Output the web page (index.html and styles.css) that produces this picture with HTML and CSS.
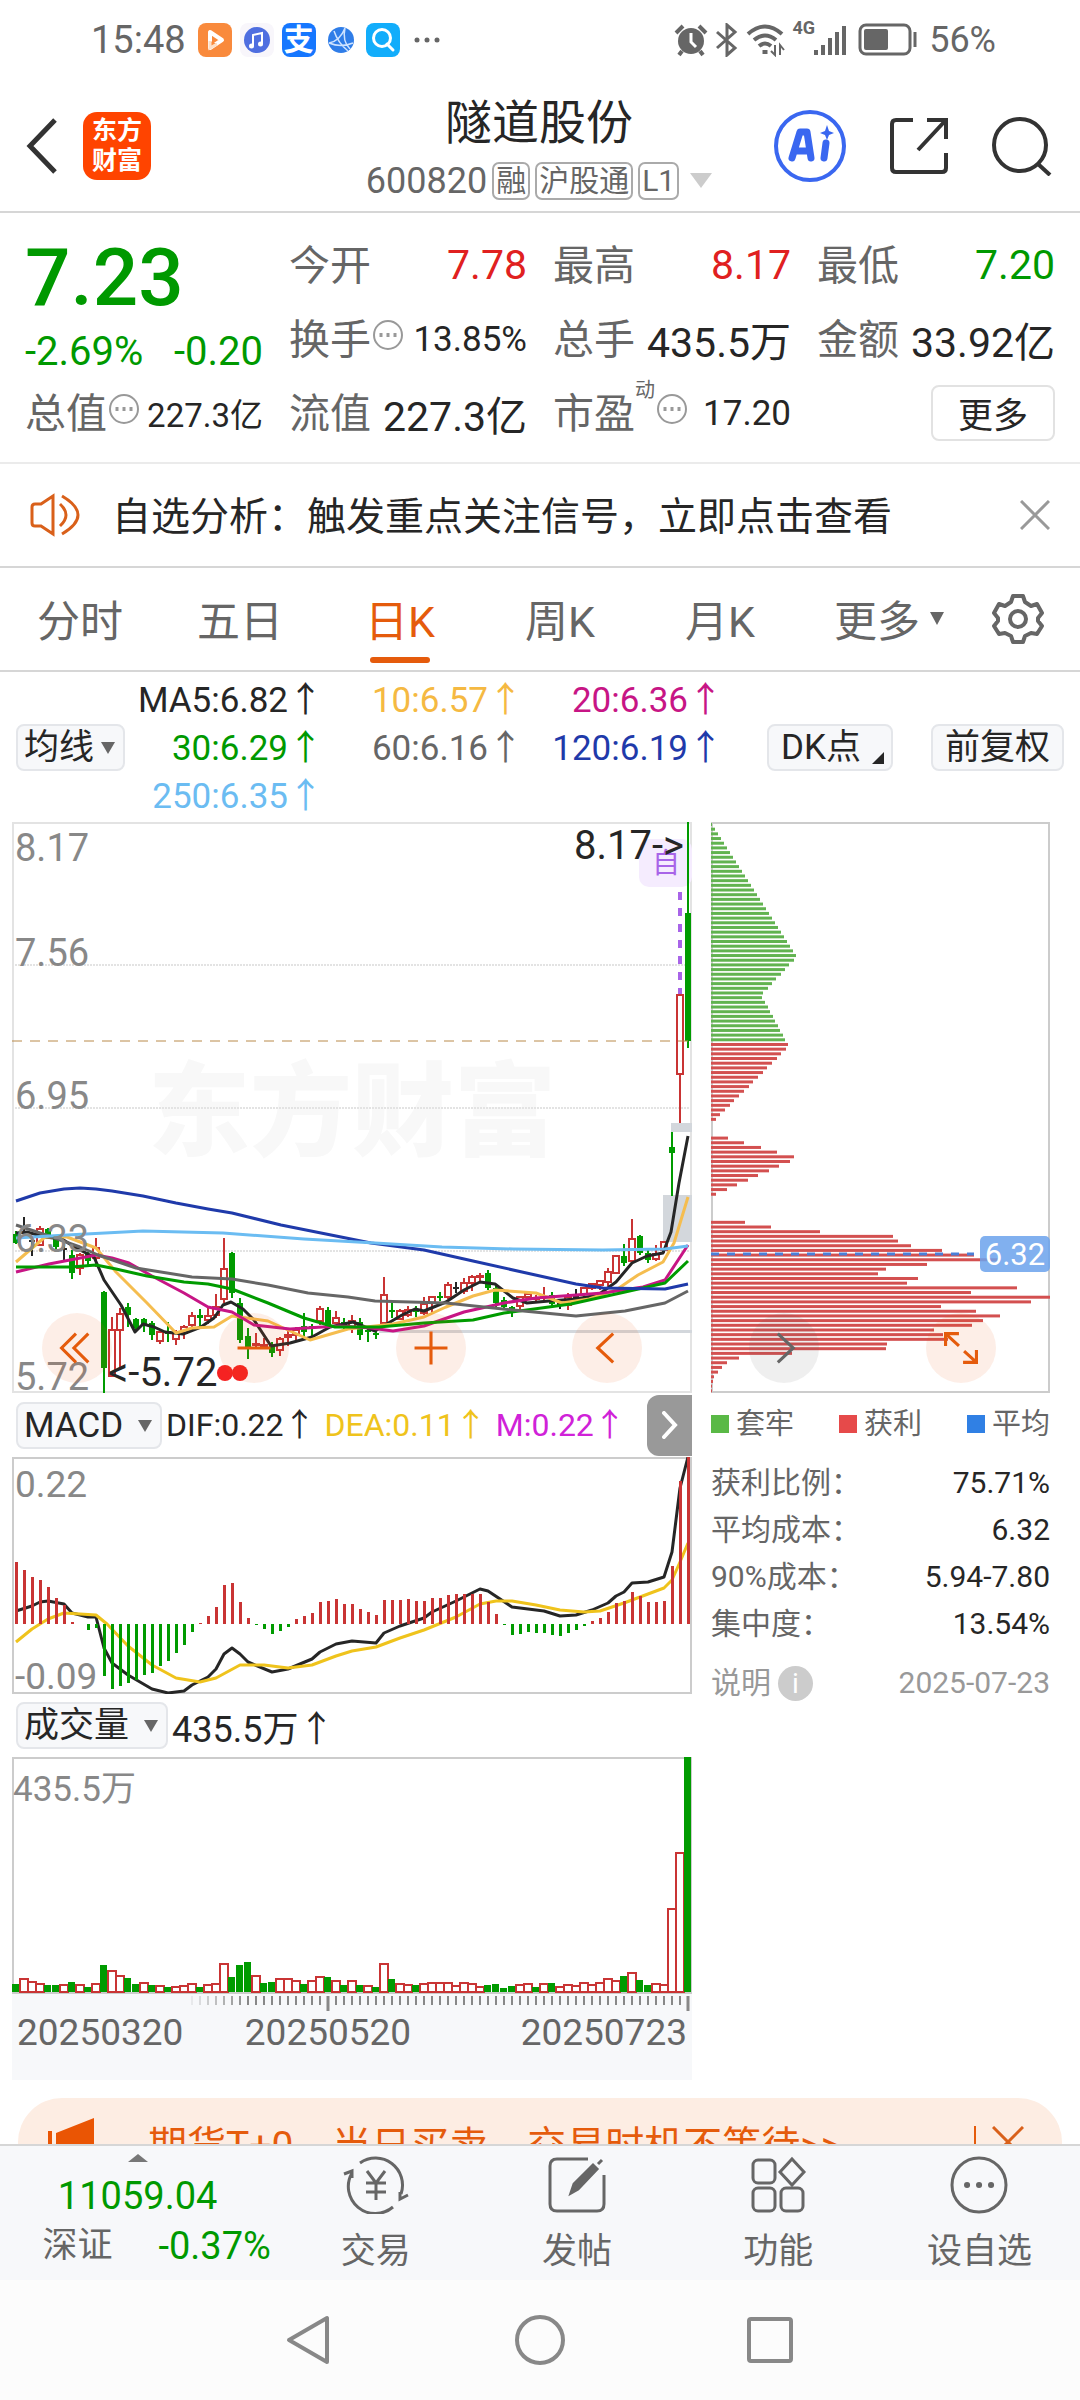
FILE: index.html
```html
<!DOCTYPE html>
<html lang="zh-CN">
<head>
    <meta charset="UTF-8">
    <meta name="viewport" content="width=device-width, initial-scale=1.0">
    <title>隧道股份 600820</title>
    <link rel="stylesheet" href="styles.css">
</head>
<body>
    <div class="status-bar">
        <div class="status-left">
            <span class="clock">15:48</span>
            <svg class="app-icon" viewBox="0 0 34 34"><rect width="34" height="34" rx="8" fill="#f98a3c"/><path d="M12 9v16l12-8z" fill="none" stroke="#fff" stroke-width="4" stroke-linejoin="round"/><path d="M12 18v7l7-4" fill="#f98a3c" stroke="#fde0c8" stroke-width="3"/></svg>
            <svg class="app-icon" viewBox="0 0 34 34"><rect width="34" height="34" rx="8" fill="#f8f6fb"/><circle cx="17" cy="17" r="13" fill="#4f6fe0"/><path d="M13 23V12l9-2v11" fill="none" stroke="#fff" stroke-width="2"/><circle cx="11.500" cy="23" r="2.500" fill="#fff"/><circle cx="20.500" cy="21" r="2.500" fill="#fff"/></svg>
            <span class="app-icon pay">支</span>
            <svg class="app-icon" viewBox="0 0 34 34"><circle cx="17" cy="17" r="13" fill="#2f7de8"/><path d="M5 20Q16 18 21 5M21 5Q18 18 26 26M5 20Q17 25 29 20M10 8Q14 20 24 28" fill="none" stroke="#cfe3ff" stroke-width="1.500"/></svg>
            <svg class="app-icon" viewBox="0 0 34 34"><rect width="34" height="34" rx="8" fill="#12adfb"/><circle cx="16" cy="15" r="8.500" fill="none" stroke="#fff" stroke-width="3"/><path d="M21 21l6 6" stroke="#fff" stroke-width="3" stroke-linecap="round"/></svg>
            <svg class="dots" viewBox="0 0 26 34" fill="#666"><circle cx="3" cy="17" r="2.500"/><circle cx="13" cy="17" r="2.500"/><circle cx="23" cy="17" r="2.500"/></svg>
        </div>
        <div class="status-right">
            <svg width="34" height="34" viewBox="0 0 34 34"><circle cx="17" cy="18" r="13" fill="#666"/><path d="M17 10v9l5 5" fill="none" stroke="#fff" stroke-width="3"/><path d="M2 10l7-7M32 10l-7-7M8 28l-3 4M26 28l3 4" stroke="#666" stroke-width="4"/></svg>
            <svg width="24" height="34" viewBox="0 0 24 34"><path d="M2 9l18 16-8 7V2l8 7L2 25" fill="none" stroke="#666" stroke-width="3"/></svg>
            <svg width="40" height="34" viewBox="0 0 40 34" fill="none" stroke="#666" stroke-width="4"><path d="M2 11Q19-4 36 11M8 17Q19 8 30 17M13 23Q19 18 25 23"/><path d="M19 27v4" stroke-width="5"/><path d="M29 22v10l-4-4M34 32V22l4 5" stroke-width="2"/></svg>
            <span class="net">4G</span>
            <svg width="33" height="34" viewBox="0 0 33 34" stroke="#666" stroke-width="4"><path d="M2 27v5M9 22v10M16 15v17M23 9v23M30 3v29"/></svg>
            <svg class="battery" width="60" height="34" viewBox="0 0 60 34"><rect x="2" y="2" width="50" height="29" rx="6" fill="none" stroke="#666" stroke-width="3"/><rect x="6" y="6" width="24" height="21" rx="2" fill="#666"/><path d="M57 9v15" stroke="#666" stroke-width="3"/></svg>
            <span>56%</span>
        </div>
    </div>

    <header class="header">
        <div class="header-side">
            <button class="icon-btn" aria-label="返回"><svg width="34" height="60" viewBox="0 0 34 60"><path d="M29 4L4 30l25 26" fill="none" stroke="#333" stroke-width="5"/></svg></button>
            <a class="logo" href="#">东方<br>财富</a>
        </div>
        <div class="header-title">
            <h1>隧道股份</h1>
            <div class="code">
                <span>600820</span><span class="tag">融</span><span class="tag">沪股通</span><span class="tag">L1</span>
                <svg width="22" height="15" viewBox="0 0 22 15"><path d="M0 0h22L11 15z" fill="#ccc"/></svg>
            </div>
        </div>
        <div class="header-side header-right">
            <button class="icon-btn" aria-label="AI"><svg width="72" height="72" viewBox="0 0 72 72"><circle cx="36" cy="36" r="34" fill="none" stroke="#3a67f0" stroke-width="4"/><path d="M18 48l8-26h7l4 26M21 41h14" fill="none" stroke="#3a67f0" stroke-width="7" stroke-linejoin="round" stroke-linecap="round"/><path d="M52 33l-2 15" stroke="#3a67f0" stroke-width="7" stroke-linecap="round"/><path d="M53 15l2 6 5 2-5 2-2 5-2-5-5-2 5-2z" fill="#3a67f0"/></svg></button>
            <button class="icon-btn" aria-label="分享"><svg width="60" height="60" viewBox="0 0 60 60" fill="none" stroke="#333" stroke-width="4"><path d="M24 4H7q-4 0-4 4v44q0 4 4 4h46q4 0 4-4V37M38 4h19v19M56 5L29 34"/></svg></button>
            <button class="icon-btn" aria-label="搜索"><svg width="60" height="60" viewBox="0 0 60 60" fill="none" stroke="#333" stroke-width="4"><circle cx="28" cy="29" r="26"/><path d="M46 48l12 11"/></svg></button>
        </div>
    </header>

    <main class="content">
        <section class="quote">
            <div class="price-box">
                <div class="price">7.23</div>
                <div class="change"><span>-2.69%</span><span>-0.20</span></div>
            </div>
            <div class="cell"><span class="label">今开</span><span class="red">7.78</span></div>
            <div class="cell"><span class="label">最高</span><span class="red">8.17</span></div>
            <div class="cell"><span class="label">最低</span><span class="green">7.20</span></div>
            <div class="cell"><span class="label">换手<i class="tip"></i></span><span class="small">13.85%</span></div>
            <div class="cell"><span class="label">总手</span><span>435.5万</span></div>
            <div class="cell"><span class="label">金额</span><span>33.92亿</span></div>
            <div class="cell"><span class="label">总值<i class="tip"></i></span><span class="smaller">227.3亿</span></div>
            <div class="cell"><span class="label">流值</span><span>227.3亿</span></div>
            <div class="cell"><span class="label">市盈<sup>动</sup><i class="tip"></i></span><span class="small">17.20</span></div>
            <div class="cell cell-more"><button class="more-btn">更多</button></div>
        </section>

        <section class="notice">
            <svg width="50" height="44" viewBox="0 0 50 44" fill="none" stroke="#d9601a" stroke-width="3"><path d="M2 14q0-3 3-3h6L23 3v38L11 33H5q-3 0-3-3z"/><path d="M30 11q12 11 0 22M32 3q32 19 0 38"/></svg>
            <p>自选分析：触发重点关注信号，立即点击查看</p>
            <button class="icon-btn" aria-label="关闭"><svg width="30" height="30" viewBox="0 0 30 30"><path d="M1 1l28 28M29 1L1 29" stroke="#999" stroke-width="3"/></svg></button>
        </section>

        <nav class="tabs">
            <button>分时</button>
            <button>五日</button>
            <button class="active">日K</button>
            <button>周K</button>
            <button>月K</button>
            <button class="tab-more">更多<span class="caret"></span></button>
            <button class="gear" aria-label="设置"><svg width="52" height="52" viewBox="0 0 52 52" fill="none" stroke="#666" stroke-width="4" stroke-linejoin="round"><path d="M21 3h10l2 6 6 4 6-2 5 9-4 5v3l4 5-5 8-6-1-6 3-2 6H21l-2-6-6-3-6 1-5-8 4-5v-3l-4-5 5-9 6 2 6-4z"/><circle cx="26" cy="26" r="8"/></svg></button>
        </nav>

        <section class="ma-bar">
            <div class="picker picker-ma"><select aria-label="指标"><option>均线</option></select></div>
            <div class="ma-list">
                <span class="ma5">MA5:6.82<b>↑</b></span>
                <span class="ma10">10:6.57<b>↑</b></span>
                <span class="ma20">20:6.36<b>↑</b></span>
                <span class="ma30">30:6.29<b>↑</b></span>
                <span class="ma60">60:6.16<b>↑</b></span>
                <span class="ma120">120:6.19<b>↑</b></span>
                <span class="ma250">250:6.35<b>↑</b></span>
            </div>
            <div class="ma-actions">
                <button class="chip chip-dk">DK点</button>
                <button class="chip">前复权</button>
            </div>
        </section>

        <section class="charts">
            <div class="chart-left">
                <svg id="kline" viewBox="0 0 680 571"></svg>
                <div class="ind-bar">
                    <div class="picker"><select aria-label="副图一"><option>MACD</option></select></div>
                    <span class="dif">DIF:0.22<b>↑</b></span>
                    <span class="dea">DEA:0.11<b>↑</b></span>
                    <span class="macd">M:0.22<b>↑</b></span>
                    <button class="expand" aria-label="展开"><svg width="16" height="28" viewBox="0 0 16 28"><path d="M2 2l11 12L2 26" fill="none" stroke="#fff" stroke-width="4" stroke-linecap="round"/></svg></button>
                </div>
                <svg id="macd" viewBox="0 0 680 237"></svg>
                <div class="ind-bar ind-vol">
                    <div class="picker"><select aria-label="副图二"><option>成交量</option></select></div>
                    <span>435.5万<b>↑</b></span>
                </div>
                <svg id="volume" viewBox="0 0 680 237"></svg>
                <svg id="axis" class="axis" viewBox="0 0 680 86"></svg>
            </div>

            <div class="chart-right">
                <svg id="chips" viewBox="0 0 339 571"></svg>
                <div class="legend">
                    <span><i class="sq sq-green"></i>套牢</span>
                    <span><i class="sq sq-red"></i>获利</span>
                    <span><i class="sq sq-blue"></i>平均</span>
                </div>
                <dl class="stats">
                    <div><dt>获利比例：</dt><dd>75.71%</dd></div>
                    <div><dt>平均成本：</dt><dd>6.32</dd></div>
                    <div><dt>90%成本：</dt><dd>5.94-7.80</dd></div>
                    <div><dt>集中度：</dt><dd>13.54%</dd></div>
                </dl>
                <div class="explain">
                    <span>说明<i class="info">i</i></span>
                    <time>2025-07-23</time>
                </div>
            </div>

            <!-- round buttons floating over both charts -->
            <div class="float-btns">
                <button aria-label="最左"><svg viewBox="0 0 68 68"><path d="M33 20L19 34l14 14M45 20L31 34l14 14"/></svg></button>
                <button aria-label="缩小"><svg viewBox="0 0 68 68"><path d="M18 34h32"/></svg></button>
                <button aria-label="放大"><svg viewBox="0 0 68 68"><path d="M18 34h32M34 18v32"/></svg></button>
                <button aria-label="左移"><svg viewBox="0 0 68 68"><path d="M40 20L25 34l15 14"/></svg></button>
                <button class="gray" aria-label="右移"><svg viewBox="0 0 68 68"><path d="M28 20l15 14-15 14"/></svg></button>
                <button aria-label="全屏"><svg viewBox="0 0 68 68"><path d="M19 32V20h13M20 21l12 11M49 36v12H36M48 47L37 37"/></svg></button>
            </div>
        </section>

        <div class="promo">
            <svg width="50" height="50" viewBox="0 0 50 50" fill="#ea5504"><path d="M0 14h4v24H0zM8 16L46 1v46L8 35z"/></svg>
            <a href="#">期货T+0，当日买卖，交易时机不等待&gt;&gt;</a>
            <button class="icon-btn promo-close" aria-label="关闭广告"><svg width="32" height="32" viewBox="0 0 32 32"><path d="M1 1l30 30M31 1L1 31" stroke="#d9601a" stroke-width="3"/></svg></button>
        </div>
    </main>

    <footer class="bottom-bar">
        <a class="index-box" href="#">
            <svg width="20" height="8" viewBox="0 0 20 8"><path d="M0 8L10 0l10 8z" fill="#777"/></svg>
            <span class="index-value">11059.04</span>
            <span class="index-row"><span>深证</span><span class="green">-0.37%</span></span>
        </a>
        <a class="bar-item" href="#"><svg viewBox="0 0 66 58"><path d="M17 7A27 27 0 0 1 58 38M50 51A27 27 0 0 1 9 17M1 18l8-3v7M65 39l-8 4v-7" /><path d="M24 15l9 12 9-12M33 27v17M23 27h20M23 36h20"/></svg>交易</a>
        <a class="bar-item" href="#"><svg viewBox="0 0 66 58"><path d="M44 3H13q-7 0-7 7v38q0 7 7 7h40q7 0 7-7V19"/><path d="M27 37l3-9 19-19 4 4-19 20zM54 8l4-4" fill="#666"/></svg>发帖</a>
        <a class="bar-item" href="#"><svg viewBox="0 0 66 58"><rect x="8" y="4" width="22" height="23" rx="5"/><rect x="8" y="32" width="22" height="23" rx="5"/><rect x="36" y="32" width="22" height="23" rx="5"/><path d="M47 3l12 13-12 13-12-13z"/></svg>功能</a>
        <a class="bar-item" href="#"><svg viewBox="0 0 66 58"><circle cx="33" cy="29" r="27"/><path d="M21 29h.1M33 29h.1M45 29h.1" stroke-width="6" stroke-linecap="round"/></svg>设自选</a>
    </footer>

    <nav class="sys-nav">
        <button class="icon-btn" aria-label="后退"><svg width="50" height="50" viewBox="0 0 50 50"><path d="M42 3v44L4 25z"/></svg></button>
        <button class="icon-btn" aria-label="主页"><svg width="50" height="50" viewBox="0 0 50 50"><circle cx="25" cy="25" r="23"/></svg></button>
        <button class="icon-btn" aria-label="任务"><svg width="50" height="50" viewBox="0 0 50 50"><rect x="4" y="4" width="42" height="42" rx="2"/></svg></button>
    </nav>

    <script src="charts.js"></script>
</body>
</html>
```
FILE: styles.css
```css
:root {
    --red: #e02020;
    --green: #009900;
    --orange: #e55b0c;
    --gray: #666;
    --dark: #262626;
    --line: #d6d6d6;
    --btn-bg: #f7f8fa;
}

* {
    box-sizing: border-box;
}

body {
    margin: 0;
    height: 100vh;
    display: flex;
    flex-direction: column;
    background: #fff;
    color: var(--dark);
    font-family: Roboto, "Noto Sans CJK SC", sans-serif;
}

button, select {
    font: inherit;
    color: inherit;
    border: none;
    background: none;
    padding: 0;
    margin: 0;
    cursor: pointer;
}

a {
    color: inherit;
    text-decoration: none;
}

svg {
    display: block;
}

.icon-btn {
    display: flex;
}

.red {
    color: var(--red);
}

.green {
    color: var(--green);
}

/* status bar */
.status-bar {
    flex: none;
    display: flex;
    justify-content: space-between;
    align-items: center;
    height: 80px;
    padding: 0 84px 0 91px;
    font-size: 38px;
    line-height: 44px;
    color: var(--gray);
}

.status-left, .status-right {
    display: flex;
    align-items: center;
    gap: 8px;
}

.status-right {
    gap: 7px;
    font-size: 36px;
}

.clock {
    margin-right: 4px;
}

.app-icon {
    width: 34px;
    height: 34px;
}

.pay {
    border-radius: 8px;
    background: #1677ff;
    color: #fff;
    font-size: 30px;
    font-weight: bold;
    line-height: 34px;
    text-align: center;
}

.dots {
    width: 26px;
    height: 34px;
    margin-left: 6px;
}

.net {
    font-size: 18px;
    font-weight: bold;
    line-height: 20px;
    align-self: flex-start;
    margin-right: -8px;
}

.battery {
    margin: 0 4px;
}

/* header */
.header {
    flex: none;
    display: flex;
    align-items: center;
    height: 133px;
    padding: 0 28px 0 26px;
    border-bottom: 2px solid var(--line);
}

.header-side {
    flex: 1;
    display: flex;
    align-items: center;
    gap: 23px;
}

.header-right {
    justify-content: flex-end;
    gap: 43px;
}

.logo {
    width: 68px;
    height: 68px;
    padding-top: 4px;
    border-radius: 14px;
    background: #ff4400;
    color: #fff;
    font-size: 25px;
    font-weight: bold;
    line-height: 30px;
    text-align: center;
}

.header-title {
    padding-top: 6px;
    text-align: center;
}

.header-title h1 {
    margin: 0;
    font-size: 47px;
    font-weight: normal;
    line-height: 64px;
}

.code {
    display: flex;
    align-items: center;
    justify-content: center;
    gap: 5px;
    font-size: 36px;
    line-height: 52px;
    color: var(--gray);
}

.code .tag {
    padding: 0 2px;
    border: 2px solid #aaa;
    border-radius: 7px;
    font-size: 30px;
    line-height: 34px;
}

.code svg {
    margin-left: 6px;
}

.content {
    flex: 1;
    min-height: 0;
    overflow: hidden;
}

.quote {
    display: grid;
    grid-template-columns: repeat(4, 1fr);
    grid-auto-rows: 74px;
    column-gap: 26px;
    padding: 15px 25px 12px;
    border-bottom: 2px solid #ebebeb;
    font-size: 41px;
}

.price-box {
    grid-row: span 2;
    color: var(--green);
}

.price {
    font-size: 80px;
    font-weight: 500;
    line-height: 100px;
}

.change {
    display: flex;
    justify-content: space-between;
    font-size: 40px;
    line-height: 48px;
}

.cell {
    display: flex;
    align-items: center;
    justify-content: space-between;
    white-space: nowrap;
}

.cell .small {
    font-size: 35px;
}

.cell .smaller {
    font-size: 33px;
}

.cell-more {
    justify-content: flex-end;
}

.label {
    display: flex;
    align-items: center;
    padding-bottom: 6px;
    color: var(--gray);
}

.label sup {
    align-self: flex-start;
    font-size: 20px;
    line-height: 20px;
}

.tip {
    width: 30px;
    height: 30px;
    margin-bottom: 2px;
    border: 2px solid #999;
    border-radius: 50%;
    background: radial-gradient(circle, #999 2px, transparent 2px) center / 7px 30px;
    background-clip: content-box;
    padding: 0 3px;
    margin-left: 2px;
}

.more-btn {
    width: 124px;
    height: 56px;
    border: 2px solid #e2e2e2;
    border-radius: 8px;
    padding-bottom: 4px;
    font-size: 35px;
}

.notice {
    display: flex;
    align-items: center;
    height: 104px;
    padding: 0 30px;
    border-bottom: 2px solid var(--line);
    font-size: 39px;
}

.notice p {
    flex: 1;
    margin: 0 0 0 32px;
    padding-bottom: 5px;
}

/* period tabs */
.tabs {
    display: flex;
    height: 104px;
    border-bottom: 2px solid var(--line);
    font-size: 43px;
    color: var(--gray);
}

.tabs button {
    flex: 160;
    display: flex;
    align-items: center;
    justify-content: center;
    position: relative;
    padding-bottom: 2px;
}

.tabs .active {
    color: var(--orange);
}

.tabs .active::after {
    content: '';
    position: absolute;
    bottom: 7px;
    width: 60px;
    height: 6px;
    border-radius: 3px;
    background: var(--orange);
}

.tabs .tab-more {
    flex: 178;
    gap: 10px;
}

.tabs .gear {
    flex: 80;
    padding: 0 22px 0 0;
}

.caret {
    border: 7px solid transparent;
    border-top: 13px solid var(--gray);
    border-bottom: none;
}

/* moving average row */
.ma-bar {
    display: flex;
    align-items: center;
    height: 150px;
    padding: 0 16px;
    font-size: 35px;
}

.ma-list {
    display: grid;
    grid-template-columns: 191px 200px 200px;
    grid-auto-rows: 48px;
    padding-top: 3px;
    line-height: 48px;
    text-align: right;
    white-space: nowrap;
}

/* the arrow glyph is full width, pull in its side space */
b {
    margin-right: -7px;
    font-family: "Noto Sans CJK SC", sans-serif;
    font-weight: normal;
    line-height: 1;
}

.ma5, .dif { color: var(--dark); }
.ma10 { color: #f5b942; }
.ma20 { color: #c71585; }
.ma30 { color: var(--green); }
.ma60 { color: var(--gray); }
.ma120 { color: #1f3aaa; }
.ma250 { color: #6bbcf2; }
.dea { color: #efc31c; }
.macd { color: #d022d8; }

.ma-actions {
    flex: 1;
    display: flex;
    justify-content: flex-end;
    gap: 38px;
}

.chip, .picker {
    height: 47px;
    border: 2px solid #e4e6ea;
    border-radius: 8px;
    background: var(--btn-bg);
    line-height: 43px;
}

.chip {
    padding: 0 12px;
}

.chip-dk {
    display: flex;
    align-items: flex-end;
    gap: 11px;
}

.chip-dk::after {
    content: '';
    border-left: 12px solid transparent;
    border-bottom: 12px solid var(--dark);
    margin: 0 -5px 5px 0;
}

.picker {
    position: relative;
    padding: 0 6px;
}

.picker select {
    appearance: none;
    display: block;
    height: 43px;
    padding-right: 30px;
    font-size: 35px;
}

.picker::after {
    content: '';
    position: absolute;
    top: 16px;
    right: 8px;
    border: 7px solid transparent;
    border-top: 12px solid var(--gray);
    border-bottom: none;
    pointer-events: none;
}

.picker-ma select {
    padding-right: 22px;
}

/* charts */
.charts {
    display: flex;
    align-items: flex-start;
    gap: 19px;
    padding: 0 30px 0 12px;
    position: relative;
}

.chart-left {
    flex: 680 1 0;
    min-width: 0;
}

.chart-right {
    flex: 339 1 0;
    min-width: 0;
}

.chart-left > svg, .chart-right > svg {
    width: 100%;
    height: auto;
}

.ind-bar {
    display: flex;
    align-items: center;
    height: 64px;
    padding-left: 4px;
    font-size: 32px;
    white-space: nowrap;
}

.ind-bar > span {
    margin-right: 16px;
}

.ind-bar .picker {
    margin-right: 4px;
}

.ind-vol {
    height: 63px;
    font-size: 36px;
}

.expand {
    flex: none;
    display: flex;
    align-items: center;
    justify-content: center;
    width: 45px;
    height: 61px;
    margin-left: auto;
    border-radius: 12px 0 0 12px;
    background: #999;
}

.axis {
    background: var(--btn-bg);
}

svg text {
    font-family: Roboto, "Noto Sans CJK SC", sans-serif;
}

.legend {
    display: flex;
    justify-content: space-between;
    font-size: 29px;
    line-height: 44px;
    padding: 9px 0 13px;
    color: var(--gray);
}

.legend span {
    display: flex;
    align-items: center;
    gap: 7px;
}

.sq {
    width: 18px;
    height: 18px;
}

.sq-green { background: #5ab946; }
.sq-red { background: #e64a4a; }
.sq-blue { background: #3080e4; }

.stats {
    margin: 0;
    font-size: 30px;
    line-height: 47px;
}

.stats div {
    display: flex;
    justify-content: space-between;
}

.stats dt {
    color: var(--gray);
}

.stats dd {
    margin: 0;
}

.explain {
    display: flex;
    justify-content: space-between;
    align-items: center;
    padding-top: 12px;
    font-size: 30px;
    line-height: 48px;
    color: #999;
}

.explain span {
    display: flex;
    align-items: center;
    gap: 7px;
}

.info {
    width: 35px;
    height: 35px;
    border-radius: 50%;
    background: #ccc;
    color: #fff;
    font-size: 28px;
    font-style: normal;
    line-height: 35px;
    text-align: center;
}

.float-btns {
    position: absolute;
    top: 491px;
    left: 42px;
    right: 84px;
    display: flex;
    justify-content: space-between;
}

.float-btns button {
    width: 70px;
    height: 70px;
    border-radius: 50%;
    background: rgba(240, 90, 20, 0.1);
}

.float-btns path {
    fill: none;
    stroke: var(--orange);
    stroke-width: 3;
}

.float-btns .gray {
    background: rgba(100, 100, 100, 0.1);
}

.float-btns .gray path {
    stroke: var(--gray);
}

/* promo strip, runs under the bottom bar */
.promo {
    display: flex;
    align-items: center;
    height: 88px;
    margin: 18px;
    padding: 0 38px 0 30px;
    border-radius: 44px;
    background: #fdede3;
    color: var(--orange);
    font-size: 39px;
    white-space: nowrap;
}

.promo a {
    flex: 1;
    margin-left: 50px;
}

.promo-close {
    padding-left: 16px;
    border-left: 2px solid var(--orange);
}

/* bottom bar */
.bottom-bar {
    flex: none;
    display: flex;
    height: 136px;
    border-top: 2px solid var(--line);
    background: var(--btn-bg);
    font-size: 35px;
    color: var(--gray);
}

.index-box {
    flex: 275;
    display: flex;
    flex-direction: column;
    align-items: center;
    padding-top: 8px;
}

.index-value {
    margin-top: 8px;
    font-size: 38px;
    line-height: 52px;
    color: var(--green);
}

.index-row {
    display: flex;
    align-items: center;
    gap: 46px;
    padding-left: 38px;
    line-height: 48px;
}

.index-row .green {
    font-size: 38px;
}

.bar-item {
    flex: 201;
    display: flex;
    flex-direction: column;
    align-items: center;
    padding-top: 10px;
    line-height: 46px;
}

.bar-item svg {
    width: 66px;
    height: 58px;
    margin-bottom: 15px;
    fill: none;
    stroke: var(--gray);
    stroke-width: 3;
}

.sys-nav {
    flex: none;
    display: flex;
    align-items: center;
    justify-content: center;
    gap: 180px;
    height: 120px;
    background: #fcfcfc;
}

.sys-nav svg {
    fill: none;
    stroke: #888;
    stroke-width: 4;
    stroke-linejoin: round;
}
```
FILE: charts.js
```js
const RED = '#c93434';
const GREEN = '#009b00';
const BLACK = '#262626';
const STEP = 8;
const FIRST = 4;

function barX(i) {
    return FIRST + i * STEP;
}

function line(x1, y1, x2, y2, color, width, extra = '') {
    return `<line x1="${x1}" y1="${y1}" x2="${x2}" y2="${y2}" stroke="${color}" stroke-width="${width}" ${extra}/>`;
}

function rect(x, y, w, h, fill, extra = '') {
    return `<rect x="${x}" y="${y}" width="${w}" height="${h}" fill="${fill}" ${extra}/>`;
}

function text(x, y, str, size, color, extra = '') {
    return `<text x="${x}" y="${y}" font-size="${size}" fill="${color}" ${extra}>${str}</text>`;
}

function curve(points, color) {
    return `<polyline points="${points}" fill="none" stroke="${color}" stroke-width="3" stroke-linejoin="round"/>`;
}

function frame(w, h, color) {
    return rect(1, 1, w - 2, h - 2, 'none', `stroke="${color}" stroke-width="2"`);
}

// type, high, body top, body bottom, low (chart units, from the top)
const candles = [
    ['g', 409, 412, 421, 422], ['k', 395, 410, 411, 412], ['k', 415, 418, 419, 434], ['r', 404, 407, 423, 424],
    ['g', 406, 407, 415, 416], ['g', 415, 416, 425, 429], ['k', 420, 426, 427, 438], ['g', 428, 433, 451, 457],
    ['r', 431, 433, 446, 453], ['g', 430, 432, 439, 443], ['r', 416, 426, 436, 445], ['g', 469, 470, 546, 571],
    ['r', 495, 508, 554, 555], ['r', 486, 492, 508, 548], ['g', 481, 485, 493, 505], ['g', 496, 497, 506, 510],
    ['g', 496, 497, 502, 510], ['g', 499, 501, 513, 518], ['r', 509, 510, 519, 522], ['g', 500, 509, 512, 520],
    ['r', 508, 511, 517, 523], ['r', 503, 505, 511, 517], ['r', 490, 494, 503, 508], ['g', 487, 493, 496, 507],
    ['r', 486, 494, 498, 502], ['r', 472, 485, 493, 496], ['r', 416, 447, 477, 481], ['g', 430, 431, 471, 476],
    ['g', 476, 481, 518, 521], ['g', 506, 514, 526, 537], ['r', 511, 522, 523, 526], ['r', 516, 523, 525, 526],
    ['g', 520, 523, 531, 535], ['r', 515, 517, 528, 534], ['r', 508, 513, 515, 524], ['r', 505, 508, 513, 519],
    ['g', 491, 504, 510, 515], ['g', 502, 504, 505, 518], ['r', 484, 487, 499, 503], ['g', 485, 488, 505, 507],
    ['r', 489, 496, 501, 502], ['g', 496, 500, 505, 508], ['r', 493, 499, 505, 511], ['g', 496, 500, 513, 518],
    ['g', 506, 508, 510, 520], ['g', 505, 511, 513, 517], ['r', 455, 473, 501, 503], ['g', 480, 488, 489, 496],
    ['r', 487, 489, 497, 498], ['r', 484, 488, 493, 495], ['g', 484, 488, 489, 495], ['r', 475, 482, 491, 493],
    ['r', 475, 475, 481, 491], ['g', 470, 474, 475, 479], ['r', 460, 463, 475, 477], ['k', 460, 465, 466, 471],
    ['r', 456, 461, 469, 472], ['r', 453, 455, 461, 469], ['r', 451, 454, 455, 460], ['g', 448, 451, 466, 468],
    ['g', 463, 466, 481, 487], ['g', 475, 478, 485, 486], ['g', 484, 485, 491, 495], ['r', 474, 475, 484, 490],
    ['r', 470, 472, 475, 478], ['r', 473, 476, 477, 480], ['r', 465, 475, 476, 480], ['g', 470, 473, 482, 484],
    ['k', 478, 481, 482, 487], ['r', 471, 475, 483, 488], ['k', 467, 474, 475, 477], ['r', 465, 466, 472, 475],
    ['r', 461, 462, 466, 468], ['r', 458, 459, 463, 468], ['r', 446, 450, 460, 464], ['r', 433, 434, 451, 452],
    ['g', 422, 434, 441, 444], ['r', 397, 417, 439, 441], ['g', 413, 414, 431, 433], ['g', 428, 431, 438, 441],
    ['r', 423, 432, 437, 439], ['r', 419, 420, 428, 431], ['g', 310, 325, 331, 374], ['r', 172, 173, 252, 301],
    ['g', 0, 91, 219, 226]
];

const averages = [
    ['#262626', '4,411 15,410 33,415 50,417 64,426 82,435 92,458 109,483 123,510 131,502 142,505 153,510 171,512 189,505 202,496 211,483 219,480 231,487 242,498 259,524 278,521 300,515 318,505 341,500 363,509 390,493 403,487 412,489 434,480 452,468 468,460 483,462 501,476 515,481 537,479 564,477 586,473 604,460 620,441 635,434 651,431 659,410 667,361 676,314'],
    ['#f5bd4f', '4,440 33,415 55,415 84,426 104,450 135,481 164,511 180,506 202,505 220,494 256,499 298,518 336,507 381,502 412,495 434,485 461,474 483,468 524,471 550,481 577,477 604,468 626,453 651,440 662,421 676,375'],
    ['#c71585', '4,450 37,442 84,433 100,436 117,441 140,454 172,471 196,485 220,490 242,503 278,507 327,504 359,506 381,509 412,504 452,490 492,481 524,476 591,471 631,465 653,458 676,423'],
    ['#009b00', '4,445 59,445 84,443 104,447 135,454 172,460 196,462 220,467 256,481 292,496 323,505 367,505 412,501 461,498 492,491 559,482 613,470 653,461 676,439'],
    ['#666666', '4,403 37,414 68,425 86,433 124,446 180,455 220,457 256,463 296,471 336,475 363,479 434,481 501,488 564,494 613,489 653,481 676,469'],
    ['#1f3aaa', '4,379 28,371 52,367 68,366 84,367 100,369 131,374 164,381 196,387 220,391 269,403 309,411 359,421 412,428 461,439 510,450 564,462 591,466 653,467 676,462'],
    ['#6bbcf2', '4,416 55,413 131,409 211,411 292,417 363,421 430,425 501,427 591,428 653,427 676,424']
];

const macdBars = [
    62, 54, 47, 44, 37, 26, 19, 2, 0, -6, -4, -52, -65, -62, -59, -56, -51, -49, -42, -37, -29, -21, -8, 1, 8, 17, 39, 41,
    22, 6, -1, -5, -10, -7, -3, 5, 8, 11, 22, 23, 25, 20, 20, 15, 12, 9, 24, 24, 24, 25, 23, 23, 26, 26, 29, 30, 30, 30,
    30, 22, 10, -1, -11, -10, -8, -9, -9, -11, -12, -9, -6, -2, 3, 6, 12, 21, 23, 32, 28, 22, 22, 23, 58, 143, 167
];
const dif = '4,154 20,149 28,145 36,144 52,147 60,156 76,160 84,160 92,191 100,206 116,218 140,232 156,236 172,234 180,228 196,220 204,212 212,197 220,191 228,197 236,205 260,215 276,212 300,202 308,195 324,187 340,184 364,186 372,176 388,169 412,161 420,155 444,144 468,132 476,134 500,150 532,154 548,159 564,158 580,153 596,146 604,139 612,135 620,126 636,125 652,120 660,95 668,31 676,0';
const dea = '4,185 20,172 36,162 52,156 84,158 95,167 116,189 140,208 164,221 188,225 204,221 228,208 252,208 276,211 300,208 324,199 340,194 364,190 388,181 412,173 444,160 468,147 484,144 500,144 524,148 548,153 572,155 588,154 612,146 636,137 652,131 660,123 668,105 676,86';

// positive = up day, negative = down day
const volumes = [
    -8, 14, 11, 9, -7, -7, 8, -10, 8, -5, 9, -27, 22, 17, -14, -8, 10, -7, 7, -5, 6, 7, 9, -5, 8, 9, 29, -15, -27, -30, 17,
    -9, -10, 14, 14, 12, -8, 12, 16, -15, 12, -7, 12, -7, 7, -5, 29, -13, 9, 8, -7, 9, 10, 10, 10, 7, 10, 9, 6, -7, -8, -4,
    -6, 8, 9, -5, 9, -9, 6, 8, 7, 10, 8, 10, 14, 12, -16, 20, -12, -7, 9, 8, 84, 140, -235
];

// widths from the highest price down, the first 47 are above the close
const chipWidths = [
    1, 4, 7, 10, 13, 16, 19, 22, 25, 28, 31, 34, 37, 40, 43, 46, 49, 52, 55, 58, 61, 64, 67, 70, 73, 76, 79, 82, 85, 83,
    78, 74, 70, 65, 61, 57, 52, 51, 54, 57, 59, 62, 64, 67, 69, 72, 74, 77, 75, 70, 66, 61, 56, 52, 47, 42, 38, 33, 28, 23,
    19, 14, 9, 5, 0, 0, 0, 17, 33, 50, 66, 83, 79, 68, 58, 47, 37, 26, 16, 5, 0, 0, 0, 0, 0, 34, 60, 109, 182, 187, 200,
    231, 263, 288, 216, 175, 167, 207, 196, 306, 260, 339, 320, 230, 265, 289, 272, 261, 223, 232, 237, 176, 175, 81, 28,
    16, 11, 7, 3, 2, 1, 1
];

function drawKline() {
    let s = text(340, 326, '东方财富', 102, '#f8f8f8', 'text-anchor="middle" font-weight="900"');
    [143, 286, 429].forEach(y => {
        s += line(0, y, 680, y, '#e3e3e3', 2, 'stroke-dasharray="2 1"');
    });
    s += frame(680, 571, '#e3e3e3');
    // price gaps
    s += rect(367, 508, 313, 3, '#d3d7dc');
    s += rect(659, 301, 21, 9, '#d3d7dc');
    s += rect(651, 373, 29, 47, '#d3d7dc');
    s += rect(627, 17, 53, 48, '#f5ecfe', 'rx="10"');
    s += text(654, 51, '自', 28, '#a864e8', 'text-anchor="middle"');

    candles.forEach(([type, high, top, bottom, low], i) => {
        const x = barX(i);
        if (type === 'r') {
            s += line(x, high, x, top, RED, 2) + line(x, bottom, x, low, RED, 2);
            s += rect(x - 3, top, 6, Math.max(bottom - top, 1), '#fff', `stroke="${RED}" stroke-width="2"`);
        } else {
            const color = type === 'g' ? GREEN : BLACK;
            s += line(x, high, x, low, color, 2);
            s += rect(x - 3, top, 6, Math.max(bottom - top, 2), color);
        }
    });
    averages.forEach(([color, points]) => {
        s += curve(points, color);
    });
    s += line(0, 219, 680, 219, '#b98a4a', 1, 'stroke-dasharray="10 8"');
    s += line(668, 70, 668, 172, '#a864e8', 4, 'stroke-dasharray="8 8"');

    s += text(3, 39, '8.17', 38, '#888') + text(3, 144, '7.56', 38, '#888') + text(3, 287, '6.95', 38, '#888');
    s += text(3, 430, '6.33', 38, '#888') + text(3, 568, '5.72', 38, '#888');
    s += text(672, 37, '8.17-&gt;', 40, BLACK, 'text-anchor="end"');
    s += text(96, 564, '&lt;-5.72', 40, BLACK);
    s += '<circle cx="213" cy="551" r="8" fill="#f52222"/><circle cx="228" cy="551" r="8" fill="#f52222"/>';
    document.getElementById('kline').innerHTML = s;
}

function drawMacd() {
    let s = frame(680, 237, '#ccc');
    s += curve(dif, BLACK) + curve(dea, '#efc31c');
    macdBars.forEach((v, i) => {
        s += rect(barX(i) - 1, v > 0 ? 167 - v : 167, 3, Math.abs(v), v > 0 ? RED : GREEN);
    });
    s += text(3, 40, '0.22', 37, '#888') + text(3, 232, '-0.09', 37, '#888');
    document.getElementById('macd').innerHTML = s;
}

function drawVolume() {
    let s = frame(680, 237, '#ccc');
    volumes.forEach((v, i) => {
        const x = barX(i);
        if (v > 0) {
            s += rect(x - 4, 236 - v, 8, v - 1, '#fff', `stroke="${RED}" stroke-width="2"`);
        } else {
            s += rect(x - 4, 235 + v, 7, -v, GREEN);
        }
    });
    s += text(1, 44, '435.5万', 35, '#888');
    document.getElementById('volume').innerHTML = s;

    let a = '';
    for (let i = 22; i < 85; i++) {
        const big = i === 39 || i === 84;
        a += line(barX(i), 2, barX(i), big ? 17 : 11, '#888', big ? 3 : 2, `opacity="${Math.min(1, (i - 21) / 8)}"`);
    }
    a += text(5, 51, '20250320', 37, '#666');
    a += text(316, 51, '20250520', 37, '#666', 'text-anchor="middle"');
    a += text(675, 51, '20250723', 37, '#666', 'text-anchor="end"');
    document.getElementById('axis').innerHTML = a;
}

function drawChips() {
    let s = frame(339, 571, '#ccc');
    chipWidths.forEach((w, i) => {
        s += rect(0, 1 + i * 571 / 122, w, 3, i < 47 ? '#62b350' : '#d35050');
    });
    s += line(0, 432, 263, 432, '#4a7fd8', 3, 'stroke-dasharray="8 8"');
    s += rect(269, 414, 70, 36, '#6ba2ec', 'rx="5" opacity="0.85"');
    s += text(304, 443, '6.32', 31, '#fff', 'text-anchor="middle"');
    document.getElementById('chips').innerHTML = s;
}

drawKline();
drawMacd();
drawVolume();
drawChips();
```
